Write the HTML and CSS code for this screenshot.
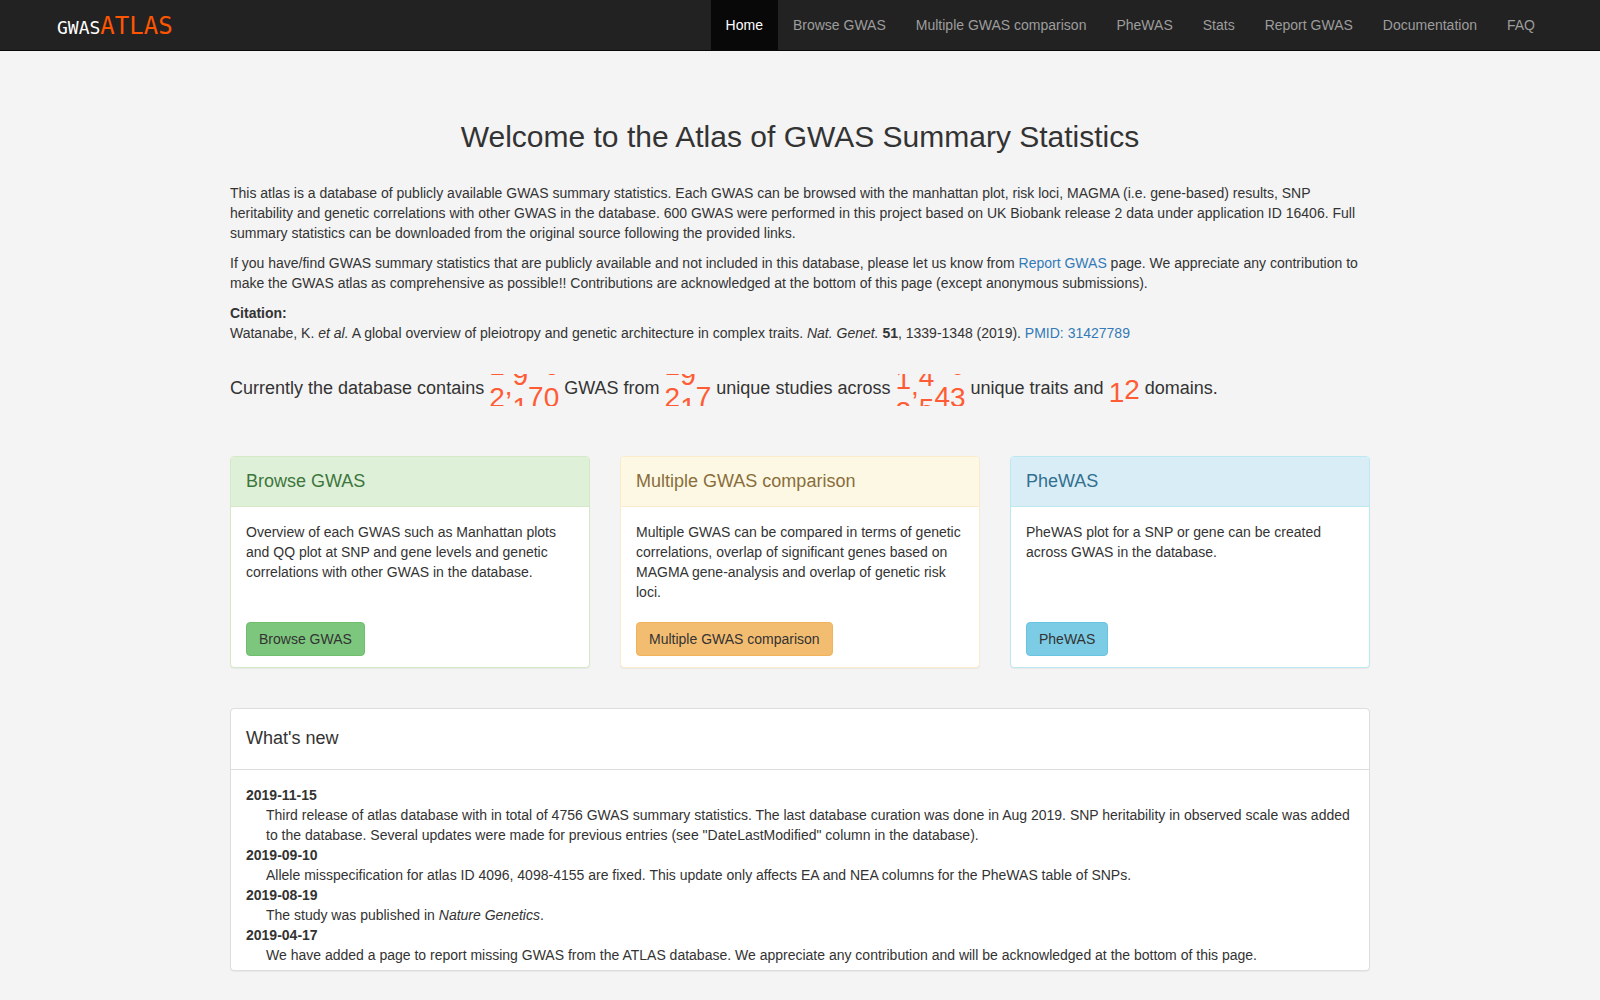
FILE: index.html
```html
<!DOCTYPE html>
<html lang="en">
<head>
    <meta charset="utf-8">
    <title>GWAS ATLAS</title>
    <link rel="stylesheet" href="styles.css">
</head>
<body>
    <nav class="navbar">
        <a class="brand" href="#"><span class="brand-gwas">GWAS</span><span class="brand-atlas">ATLAS</span></a>
        <ul class="nav">
            <li class="active"><a href="#">Home</a></li>
            <li><a href="#">Browse GWAS</a></li>
            <li><a href="#">Multiple GWAS comparison</a></li>
            <li><a href="#">PheWAS</a></li>
            <li><a href="#">Stats</a></li>
            <li><a href="#report">Report GWAS</a></li>
            <li><a href="#">Documentation</a></li>
            <li><a href="#">FAQ</a></li>
        </ul>
    </nav>

    <div class="container">
        <h2>Welcome to the Atlas of GWAS Summary Statistics</h2>
        <p>
            This atlas is a database of publicly available GWAS summary statistics.
            Each GWAS can be browsed with the manhattan plot, risk loci, MAGMA (i.e. gene-based) results, SNP heritability and genetic correlations with other GWAS in the database.
            600 GWAS were performed in this project based on UK Biobank release 2 data under application ID 16406.
            Full summary statistics can be downloaded from the original source following the provided links.
        </p>
        <p>
            If you have/find GWAS summary statistics that are publicly available and not included in this database, please let us know from <a href="#report">Report GWAS</a> page.
            We appreciate any contribution to make the GWAS atlas as comprehensive as possible!!
            Contributions are acknowledged at the bottom of this page (except anonymous submissions).
        </p>
        <p>
            <b>Citation:</b><br>
            Watanabe, K. <i>et al.</i> A global overview of pleiotropy and genetic architecture in complex traits. <i>Nat. Genet.</i> <b>51</b>, 1339-1348 (2019). <a href="#">PMID: 31427789</a>
        </p>

        <!-- each column of a counter holds the outgoing and the incoming digit -->
        <div class="summary">
            Currently the database contains
            <span class="counter"><span class="roll" style="--roll: 8px">1<br>2</span><span class="roll" style="--roll: -4px"><br>,</span><span class="roll" style="--roll: 18px">9<br>1</span><span class="roll" style="--roll: 7px"><br>7</span><span class="roll" style="--roll: 8px">6<br>0</span></span>
            GWAS from
            <span class="counter"><span class="roll" style="--roll: 8px">1<br>2</span><span class="roll" style="--roll: 18px">9<br>1</span><span class="roll" style="--roll: 7px"><br>7</span></span>
            unique studies across
            <span class="counter"><span class="roll" style="--roll: 22px">1<br>2</span><span class="roll" style="--roll: -4px"><br>,</span><span class="roll" style="--roll: 19px">4<br>5</span><span class="roll" style="--roll: 7px"><br>4</span><span class="roll" style="--roll: 8px">0<br>3</span></span>
            unique traits and
            <span class="counter"><span class="roll" style="--roll: 3px"><br>1</span><span class="roll" style="--roll: 0px"><br>2</span></span>
            domains.
        </div>

        <div class="row">
            <div class="panel panel-success">
                <div class="panel-heading">Browse GWAS</div>
                <div class="panel-body">
                    <div>Overview of each GWAS such as Manhattan plots and QQ plot at SNP and gene levels and genetic correlations with other GWAS in the database.</div>
                    <button type="button" class="btn btn-success">Browse GWAS</button>
                </div>
            </div>
            <div class="panel panel-warning">
                <div class="panel-heading">Multiple GWAS comparison</div>
                <div class="panel-body">
                    <div>Multiple GWAS can be compared in terms of genetic correlations, overlap of significant genes based on MAGMA gene-analysis and overlap of genetic risk loci.</div>
                    <button type="button" class="btn btn-warning">Multiple GWAS comparison</button>
                </div>
            </div>
            <div class="panel panel-info">
                <div class="panel-heading">PheWAS</div>
                <div class="panel-body">
                    <div>PheWAS plot for a SNP or gene can be created across GWAS in the database.</div>
                    <button type="button" class="btn btn-info">PheWAS</button>
                </div>
            </div>
        </div>

        <div class="panel news">
            <div class="panel-heading">What's new</div>
            <dl class="news-list">
                <dt>2019-11-15</dt>
                <dd>Third release of atlas database with in total of 4756 GWAS summary statistics. The last database curation was done in Aug 2019. SNP heritability in observed scale was added to the database. Several updates were made for previous entries (see "DateLastModified" column in the database).</dd>
                <dt>2019-09-10</dt>
                <dd>Allele misspecification for atlas ID 4096, 4098-4155 are fixed. This update only affects EA and NEA columns for the PheWAS table of SNPs.</dd>
                <dt>2019-08-19</dt>
                <dd>The study was published in <i>Nature Genetics</i>.</dd>
                <dt>2019-04-17</dt>
                <dd>We have added a page to report missing GWAS from the ATLAS database. We appreciate any contribution and will be acknowledged at the bottom of this page.</dd>
            </dl>
        </div>
    </div>
</body>
</html>
```
FILE: styles.css
```css
* {
    box-sizing: border-box;
}

body {
    margin: 0;
    background-color: #f4f4f4;
    color: #333;
    font-family: "Helvetica Neue", Helvetica, "Liberation Sans", Arial, sans-serif;
    font-size: 14px;
    line-height: 20px;
}

a {
    color: #337ab7;
    text-decoration: none;
}

/* top bar */
.navbar {
    display: flex;
    justify-content: space-between;
    padding: 0 50px;
    background-color: #222;
    border-bottom: 1px solid #080808;
}

.brand {
    display: flex;
    align-items: baseline;
    padding: 16px 7px 10px;
    font-family: "DejaVu Sans Mono", monospace;
}

.brand-gwas {
    color: #fff;
    font-size: 18px;
}

.brand-atlas {
    color: #ff5500;
    font-size: 24px;
}

.nav {
    display: flex;
    margin: 0;
    padding: 0;
    list-style: none;
}

.nav a {
    display: block;
    padding: 15px;
    color: #9d9d9d;
}

.nav a:hover {
    color: #fff;
}

.nav .active a {
    color: #fff;
    background-color: #080808;
}

/* intro */
.container {
    max-width: 1170px;
    margin: 0 auto;
    padding: 69px 15px 29px;
}

h2 {
    margin: 0 0 30px;
    font-size: 30px;
    font-weight: 500;
    line-height: 33px;
    text-align: center;
}

p {
    margin: 0 0 10px;
}

.summary {
    margin: 31px 0 50px;
    font-size: 18px;
    line-height: 28px;
}

/* rolling numbers */
.counter {
    display: inline-flex;
    height: 32px;
    overflow: hidden;
    vertical-align: -5px;
    color: #ff5c35;
    font-size: 28px;
    line-height: 32px;
}

.roll {
    transform: translateY(calc(var(--roll) - 32px));
}

/* panels */
.row {
    display: grid;
    grid-template-columns: repeat(3, 1fr);
    gap: 30px;
    margin-bottom: 40px;
}

.panel {
    display: flex;
    flex-direction: column;
    background-color: #fff;
    border: 1px solid #ddd;
    border-radius: 4px;
    box-shadow: 0 1px 1px rgba(0, 0, 0, 0.05);
}

.panel-heading {
    padding: 14px 15px 15px;
    border-bottom: 1px solid #ddd;
    border-radius: 3px 3px 0 0;
    font-size: 18px;
}

.panel-body {
    display: flex;
    flex: 1;
    flex-direction: column;
    justify-content: space-between;
    align-items: flex-start;
    gap: 20px;
    padding: 15px 15px 11px;
}

.panel-success,
.panel-success .panel-heading {
    border-color: #d6e9c6;
}

.panel-success .panel-heading {
    color: #3c763d;
    background-color: #dff0d8;
}

.panel-warning,
.panel-warning .panel-heading {
    border-color: #faebcc;
}

.panel-warning .panel-heading {
    color: #8a6d3b;
    background-color: #fcf8e3;
}

.panel-info,
.panel-info .panel-heading {
    border-color: #bce8f1;
}

.panel-info .panel-heading {
    color: #31708f;
    background-color: #d9edf7;
}

.btn {
    padding: 6px 12px;
    border: 1px solid transparent;
    border-radius: 4px;
    color: #333;
    font: inherit;
    cursor: pointer;
}

.btn-success {
    background-color: #7dc67d;
    border-color: #6ebe6e;
}

.btn-warning {
    background-color: #f3bd71;
    border-color: #f1b25b;
}

.btn-info {
    background-color: #7ccce5;
    border-color: #68c4e0;
}

/* what's new */
.news .panel-heading {
    padding: 19px 15px 21px;
}

.news-list {
    margin: 0;
    padding: 15px 15px 5px;
}

.news-list dt {
    font-weight: bold;
}

.news-list dd {
    margin-left: 20px;
}
```
